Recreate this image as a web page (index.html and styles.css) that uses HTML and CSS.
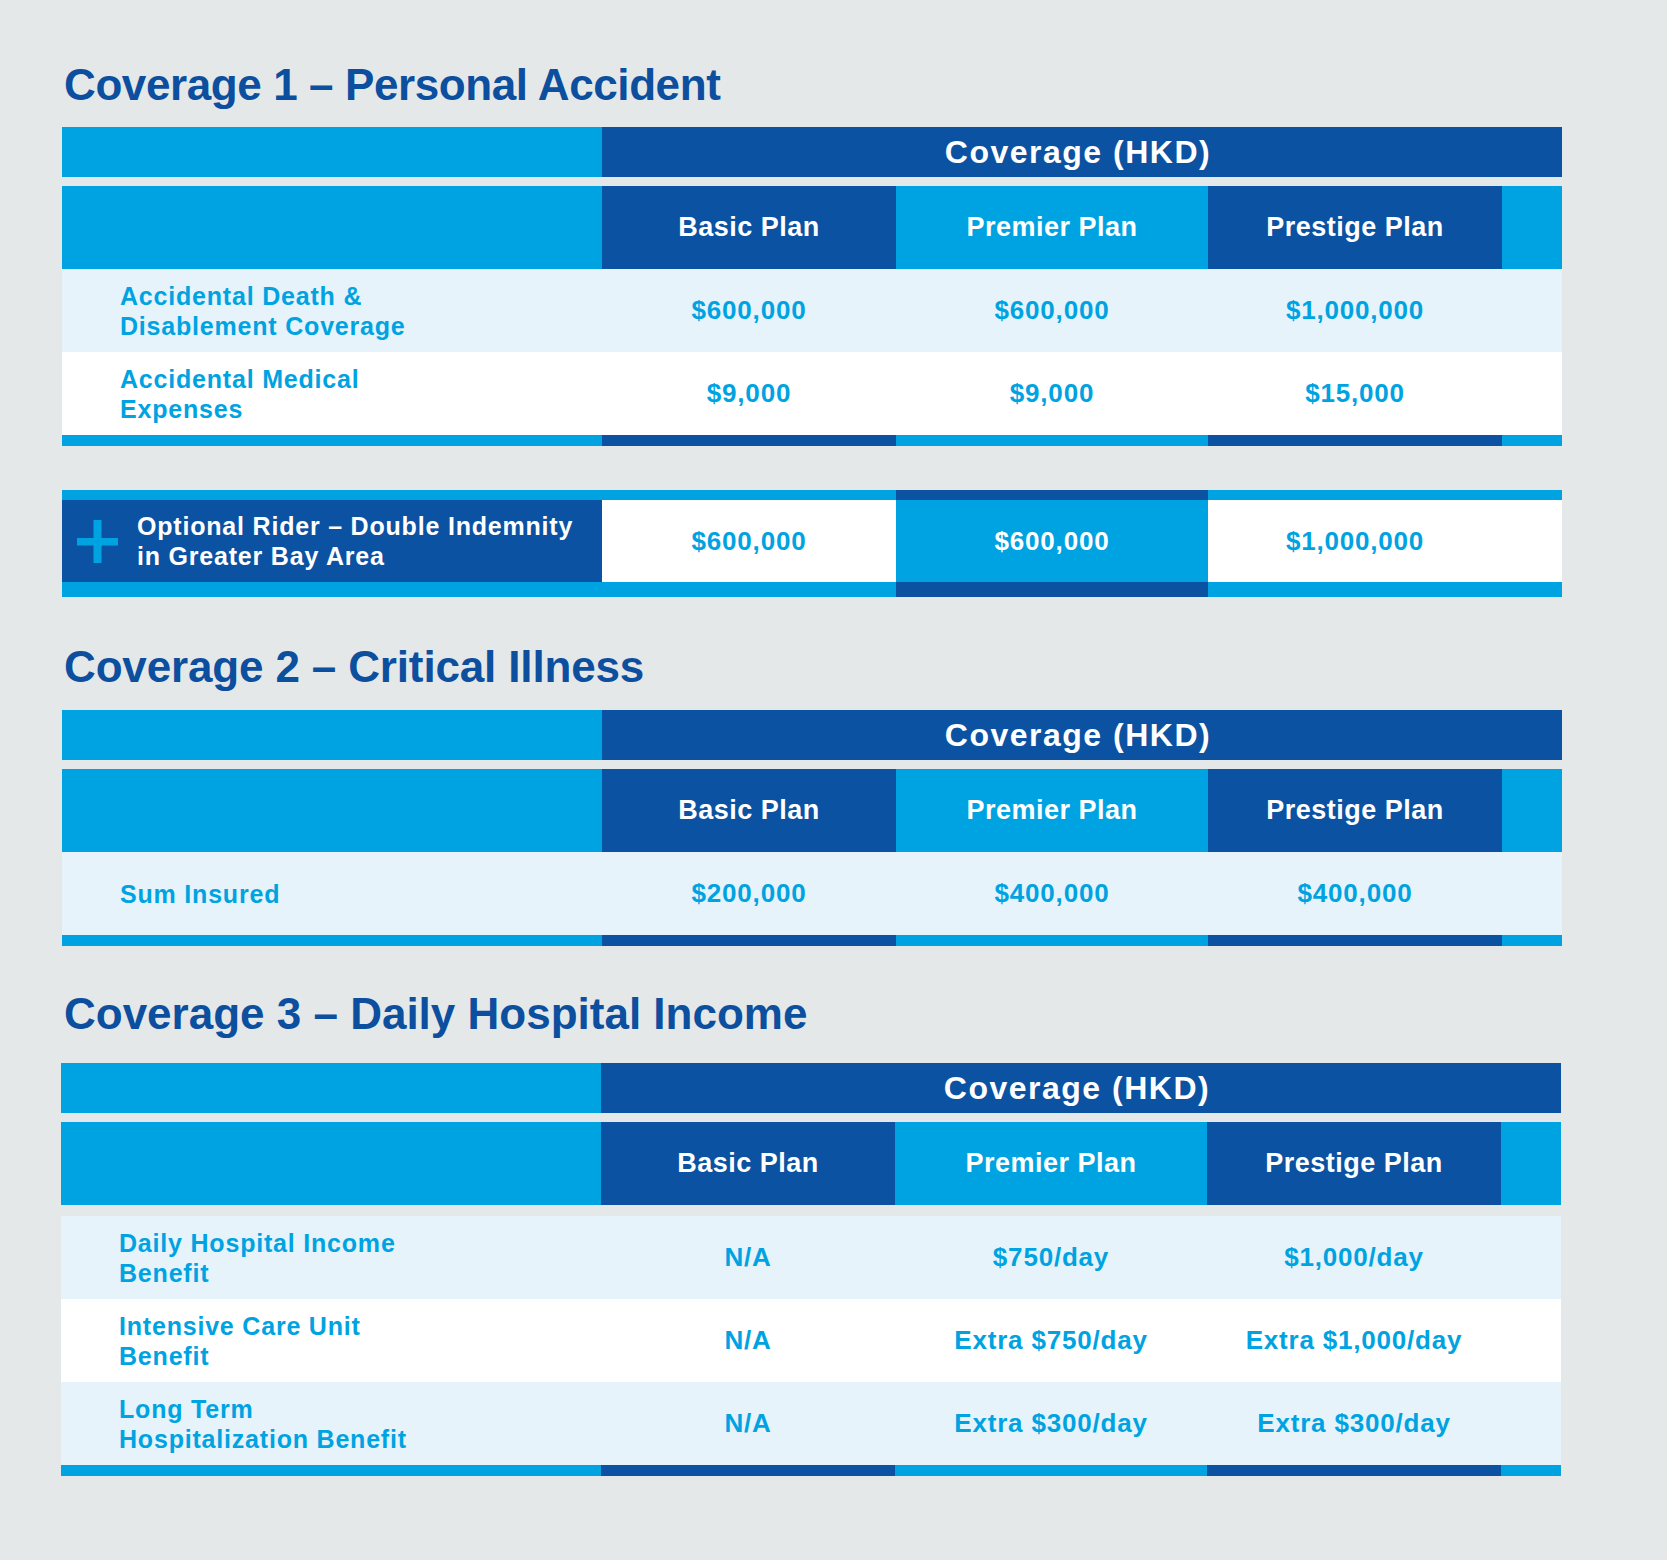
FILE: index.html
```html
<!DOCTYPE html>
<html lang="en">
<head>
<meta charset="utf-8">
<title>Coverage</title>
<link rel="stylesheet" href="styles.css">
</head>
<body>
<main class="page">

  <h2 class="title title-1">Coverage 1 – Personal Accident</h2>
  <div class="table">
    <div class="row head1">
      <div class="c light"></div>
      <div class="c dark span4">Coverage (HKD)</div>
    </div>
    <div class="row head2">
      <div class="c light"></div>
      <div class="c dark">Basic Plan</div>
      <div class="c light">Premier Plan</div>
      <div class="c dark">Prestige Plan</div>
      <div class="c light"></div>
    </div>
    <div class="row data tint">
      <div class="c label"><span>Accidental Death &amp;<br>Disablement Coverage</span></div>
      <div class="c val">$600,000</div>
      <div class="c val">$600,000</div>
      <div class="c val">$1,000,000</div>
      <div class="c"></div>
    </div>
    <div class="row data">
      <div class="c label"><span>Accidental Medical<br>Expenses</span></div>
      <div class="c val">$9,000</div>
      <div class="c val">$9,000</div>
      <div class="c val">$15,000</div>
      <div class="c"></div>
    </div>
    <div class="row bar">
      <div class="c light"></div>
      <div class="c dark"></div>
      <div class="c light"></div>
      <div class="c dark"></div>
      <div class="c light"></div>
    </div>
  </div>

  <div class="table rider">
    <div class="row bar bar-top">
      <div class="c light"></div>
      <div class="c light"></div>
      <div class="c dark"></div>
      <div class="c light"></div>
      <div class="c light"></div>
    </div>
    <div class="row rider-row">
      <div class="c rider-label">
        <svg class="plus" width="41" height="43" viewBox="0 0 41 43" aria-hidden="true">
          <rect x="0" y="18" width="41" height="7.5" fill="#00a3e1"/>
          <rect x="16.5" y="0" width="8" height="43" fill="#00a3e1"/>
        </svg>
        <span>Optional Rider – Double Indemnity<br>in Greater Bay Area</span>
      </div>
      <div class="c val white-bg">$600,000</div>
      <div class="c val light inv">$600,000</div>
      <div class="c val white-bg">$1,000,000</div>
      <div class="c white-bg"></div>
    </div>
    <div class="row bar bar-bottom">
      <div class="c light"></div>
      <div class="c light"></div>
      <div class="c dark"></div>
      <div class="c light"></div>
      <div class="c light"></div>
    </div>
  </div>

  <h2 class="title title-2">Coverage 2 – Critical Illness</h2>
  <div class="table">
    <div class="row head1">
      <div class="c light"></div>
      <div class="c dark span4">Coverage (HKD)</div>
    </div>
    <div class="row head2">
      <div class="c light"></div>
      <div class="c dark">Basic Plan</div>
      <div class="c light">Premier Plan</div>
      <div class="c dark">Prestige Plan</div>
      <div class="c light"></div>
    </div>
    <div class="row data tint">
      <div class="c label"><span>Sum Insured</span></div>
      <div class="c val">$200,000</div>
      <div class="c val">$400,000</div>
      <div class="c val">$400,000</div>
      <div class="c"></div>
    </div>
    <div class="row bar">
      <div class="c light"></div>
      <div class="c dark"></div>
      <div class="c light"></div>
      <div class="c dark"></div>
      <div class="c light"></div>
    </div>
  </div>

  <h2 class="title title-3">Coverage 3 – Daily Hospital Income</h2>
  <div class="table table-3">
    <div class="row head1">
      <div class="c light"></div>
      <div class="c dark span4">Coverage (HKD)</div>
    </div>
    <div class="row head2 head2-gap">
      <div class="c light"></div>
      <div class="c dark">Basic Plan</div>
      <div class="c light">Premier Plan</div>
      <div class="c dark">Prestige Plan</div>
      <div class="c light"></div>
    </div>
    <div class="row data tint">
      <div class="c label"><span>Daily Hospital Income<br>Benefit</span></div>
      <div class="c val">N/A</div>
      <div class="c val">$750/day</div>
      <div class="c val">$1,000/day</div>
      <div class="c"></div>
    </div>
    <div class="row data">
      <div class="c label"><span>Intensive Care Unit<br>Benefit</span></div>
      <div class="c val">N/A</div>
      <div class="c val">Extra $750/day</div>
      <div class="c val">Extra $1,000/day</div>
      <div class="c"></div>
    </div>
    <div class="row data tint">
      <div class="c label"><span>Long Term<br>Hospitalization Benefit</span></div>
      <div class="c val">N/A</div>
      <div class="c val">Extra $300/day</div>
      <div class="c val">Extra $300/day</div>
      <div class="c"></div>
    </div>
    <div class="row bar">
      <div class="c light"></div>
      <div class="c dark"></div>
      <div class="c light"></div>
      <div class="c dark"></div>
      <div class="c light"></div>
    </div>
  </div>

</main>
</body>
</html>
```

FILE: styles.css
```css
html, body {
  margin: 0;
  padding: 0;
}

body {
  background: #e4e8e9;
  font-family: "Liberation Sans", Arial, sans-serif;
  font-weight: 700;
  min-height: 1560px;
}

.page {
  padding: 59px 105px 0 62px;
  display: flex;
  flex-direction: column;
}

.title {
  margin: 0;
  font-size: 44px;
  line-height: 52px;
  letter-spacing: -0.4px;
  font-weight: 700;
  color: #0c4f9f;
  padding-left: 2px;
}

.title-1 { margin-bottom: 16px; }
.title-2 { margin-top: 44px; margin-bottom: 17px; letter-spacing: -0.15px; }
.title-3 { margin-top: 42px; margin-bottom: 23px; letter-spacing: 0; }

.table {
  width: 1500px;
  display: flex;
  flex-direction: column;
}

.table-3 {
  margin-left: -1px;
}

.row {
  display: grid;
  grid-template-columns: 540px 294px 312px 294px 60px;
}

.c {
  display: flex;
  align-items: center;
  justify-content: center;
  min-width: 0;
}

.light { background: #00a3e1; }
.dark { background: #0c52a2; }

.span4 { grid-column: span 4; }

.head1 {
  height: 50px;
  margin-bottom: 9px;
  color: #ffffff;
  font-size: 32px;
  letter-spacing: 1.5px;
}

.head1 .span4 {
  padding-right: 8px;
}

.head2 {
  height: 83px;
  color: #ffffff;
  font-size: 27px;
  letter-spacing: 0.5px;
}

.head2-gap {
  margin-bottom: 11px;
}

.data {
  height: 83px;
  background: #ffffff;
}

.data.tint {
  background: #e6f3fb;
}

.label {
  justify-content: flex-start;
  padding-left: 58px;
  color: #00a3e1;
  font-size: 25px;
  line-height: 30px;
  letter-spacing: 0.8px;
}

.val {
  color: #00a3e1;
  font-size: 26px;
  letter-spacing: 0.8px;
}

.val.inv {
  color: #ffffff;
}

.white-bg { background: #ffffff; }

.bar { height: 11px; }

.rider { margin-top: 44px; }

.bar-top { height: 10px; }
.bar-bottom { height: 15px; }

.rider-row { height: 82px; }

.rider-label {
  background: #0c52a2;
  justify-content: flex-start;
  padding-left: 15px;
  gap: 19px;
  color: #ffffff;
  font-size: 25px;
  line-height: 30px;
  letter-spacing: 0.8px;
}

.plus {
  flex: 0 0 auto;
  display: block;
}
```
